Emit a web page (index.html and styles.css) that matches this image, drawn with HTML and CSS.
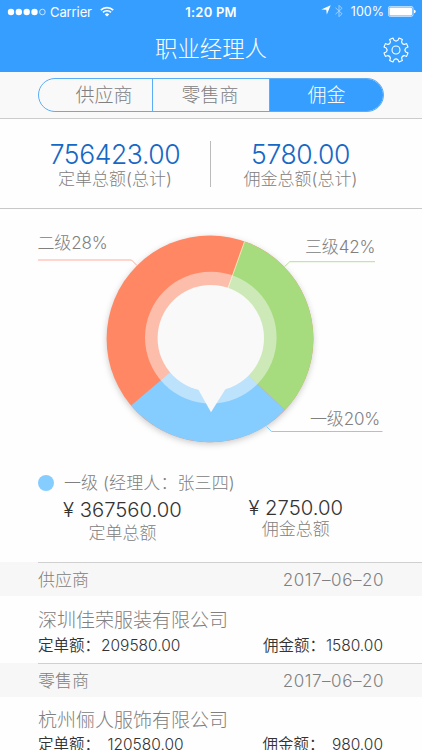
FILE: index.html
```html
<!DOCTYPE html>
<html lang="zh-CN">

<head>
    <meta charset="UTF-8">
    <meta name="viewport" content="width=device-width, initial-scale=1.0">
    <title>职业经理人</title>

    <link rel="stylesheet" href="styles.css">
</head>

<body>
    <header>
        <div class="status-bar">
            <div class="status-left">
                <svg width="39" height="8" viewBox="0 0 39 8">
                    <g fill="#fff">
                        <circle cx="4" cy="4" r="3.2" />
                        <circle cx="11.8" cy="4" r="3.2" />
                        <circle cx="19.7" cy="4" r="3.2" />
                        <circle cx="27.5" cy="4" r="3.2" />
                    </g>
                    <circle cx="35.4" cy="4" r="2.8" fill="none" stroke="#fff" stroke-width=".7" />
                </svg>
                <span class="carrier">Carrier</span>
                <svg class="wifi" width="14" height="11" viewBox="0 0 14 11" fill="none" stroke="#fff" stroke-width="1.7">
                    <path d="M.8 4.1a8.8 8.8 0 0 1 12.4 0M3 6.4a5.7 5.7 0 0 1 8 0" />
                    <path d="M7 10.6 4.8 8.4a3.2 3.2 0 0 1 4.4 0z" fill="#fff" stroke="none" />
                </svg>
            </div>
            <span class="time">1:20 PM</span>
            <div class="status-right">
                <svg class="location" width="10" height="10" viewBox="0 0 10 10"><path d="M9.7.3 5.8 9.6 5.3 4.8.3 4.4z" fill="#fff" /></svg>
                <svg class="bluetooth" width="8" height="14" viewBox="0 0 8 14" fill="none" stroke="#9bceff" stroke-width="1"><path d="M.5 3.8 7 9.7 4 12.7V1.3l3 3L.5 10.2" /></svg>
                <span class="percent">100%</span>
                <svg width="28" height="11" viewBox="0 0 28 11">
                    <rect x=".4" y=".4" width="24.6" height="10" rx="1.8" fill="none" stroke="#fff" stroke-width=".7" />
                    <rect x="1.4" y="1.4" width="22.6" height="8" rx=".8" fill="#fff" />
                    <path d="M26 3.7q1.7.2 1.7 1.8T26 7.3z" fill="#fff" />
                </svg>
            </div>
        </div>
        <div class="title-bar">
            <h1>职业经理人</h1>
            <svg class="settings" width="26" height="26" viewBox="0 0 26 26" fill="none" stroke="#fff" stroke-width="1.1" stroke-linejoin="round">
                <circle cx="13" cy="13" r="4" />
                <path d="M10 1 11 3.200Q13 5 15 3.200L16 1 19.400 2.400 18.600 4.700Q18.800 7.200 21.300 7.400L23.600 6.600 25 10 22.800 11Q21 13 22.800 15L25 16 23.600 19.400 21.300 18.600Q18.800 18.800 18.600 21.300L19.400 23.600 16 25 15 22.800Q13 21 11 22.800L10 25 6.600 23.600 7.400 21.300Q7.200 18.800 4.700 18.600L2.400 19.400 1 16 3.200 15Q5 13 3.200 11L1 10 2.400 6.600 4.700 7.400Q7.200 7.200 7.400 4.700L6.600 2.400z" />
            </svg>
        </div>
    </header>

    <nav class="tabs">
        <div class="tab-group">
            <a class="tab tab-first">供应商</a>
            <a class="tab">零售商</a>
            <a class="tab active">佣金</a>
        </div>
    </nav>

    <section class="summary">
        <div class="total">
            <strong>756423.00</strong>
            <span>定单总额(总计)</span>
        </div>
        <div class="total total-right">
            <strong>5780.00</strong>
            <span>佣金总额(总计)</span>
        </div>
    </section>

    <!-- Commission share by level -->
    <svg class="chart" width="422" height="256" viewBox="0 209 422 256">
        <circle class="ring" cx="210" cy="338.8" r="103.4" fill="#ff8763" />
        <path d="M210 338.8 244.6 241.4A103.4 103.4 0 0 1 284.9 410.1z" fill="#a6db7e" />
        <path d="M210 338.8 284.9 410.1A103.4 103.4 0 0 1 131.1 405.6z" fill="#86cdff" />
        <path d="M210 338.8 244.6 241.4" stroke="#ffe5b8" stroke-width="1" />
        <circle cx="210.8" cy="337.6" r="65.8" fill="#f9f9f9" fill-opacity=".48" />
        <circle cx="210.8" cy="338.2" r="53.2" fill="#f9f9f9" />
        <path d="M198 389 211 412.3 225.5 389z" fill="#f9f9f9" />

        <g fill="none" stroke-width="1">
            <path d="M38 260H131.5l5.5 5.5" stroke="#ffab9b" />
            <path d="M375 261.700H289.800l-5.300 5" stroke="#b5e092" />
            <path d="M382.500 431.500H271.500l-5-5" stroke="#86cdff" />
        </g>
        <g class="chart-label">
            <text x="37.500" y="249">二级28%</text>
            <text x="305" y="253">三级42%</text>
            <text x="310" y="425">一级20%</text>
        </g>
    </svg>

    <section class="detail">
        <p class="level"><i class="dot"></i>一级 (经理人：张三四)</p>
        <div class="amounts">
            <div class="amount">
                <strong>¥ 367560.00</strong>
                <span>定单总额</span>
            </div>
            <div class="amount amount-right">
                <strong>¥ 2750.00</strong>
                <span>佣金总额</span>
            </div>
        </div>
    </section>

    <section class="record">
        <div class="record-head"><span>供应商</span><time>2017–06–20</time></div>
        <h2>深圳佳荣服装有限公司</h2>
        <div class="record-money"><span>定单额：<b>209580.00</b></span><span>佣金额：<b>1580.00</b></span></div>
    </section>
    <section class="record record-last">
        <div class="record-head"><span>零售商</span><time>2017–06–20</time></div>
        <h2>杭州俪人服饰有限公司</h2>
        <div class="record-money"><span>定单额： <b>120580.00</b></span><span>佣金额： <b>980.00</b></span></div>
    </section>
</body>

</html>
```

FILE: styles.css
```css
* {
    box-sizing: border-box;
}

body {
    font-family: Inter, "Noto Sans CJK SC", sans-serif;
    font-weight: 300;
    background-color: #fefefe;
    color: #808080;
    margin: 0;
    height: 750px;
    overflow: hidden;
}

svg {
    display: block;
    flex-shrink: 0;
}

header {
    height: 72px;
    background-color: #369eff;
    color: #fff;
}

.status-bar {
    display: grid;
    grid-template-columns: 1fr auto 1fr;
    align-items: center;
    height: 23px;
    padding: 0 7px;
    font-size: 13px;
    font-weight: 400;
}

.status-left,
.status-right {
    display: flex;
    align-items: center;
}

.carrier {
    margin-left: 4px;
    letter-spacing: -0.1px;
}

.wifi {
    margin-left: 8px;
}

.time {
    font-weight: 600;
    letter-spacing: 0.2px;
}

.status-right {
    justify-content: flex-end;
    margin-right: -1px;
}

.location {
    margin-top: -3px;
}

.bluetooth {
    margin: -2px 8px 0 4px;
}

.percent {
    margin-right: 4px;
    font-size: 12.5px;
}

.title-bar {
    display: grid;
    grid-template-columns: 1fr auto 1fr;
    align-items: center;
    height: 49px;
    padding: 3px 13px 0;
}

h1 {
    grid-column: 2;
    margin: 0;
    font-size: 22.4px;
    font-weight: 300;
    line-height: 30px;
}

.settings {
    justify-self: end;
    margin-top: 2px;
}

.tabs {
    height: 47px;
    padding: 6px 38px 0;
    background-color: #f9f9f9;
    border-bottom: 1px solid #ccc;
}

.tab-group {
    display: grid;
    grid-template-columns: 113px 117px 1fr;
    height: 34px;
    border: 1px solid #5badf5;
    border-radius: 17px;
    overflow: hidden;
}

.tab {
    padding-right: 2px;
    font-size: 19px;
    line-height: 34px;
    text-align: center;
    border-left: 1px solid #5badf5;
}

.tab-first {
    padding: 0 0 0 17px;
    border-left: none;
}

.tab.active {
    padding-right: 0;
    background-color: #369eff;
    color: #fff;
}

.summary {
    display: grid;
    grid-template-columns: 211px 1fr;
    height: 90px;
    padding-top: 22px;
    border-bottom: 1px solid #c8c8c8;
}

.total {
    display: flex;
    flex-direction: column;
    align-items: center;
    height: 46px;
    padding-left: 20px;
    border-right: 1px solid #bbb;
}

.total-right {
    padding: 0 32px 0 0;
    border: none;
}

.total strong {
    font-size: 26.5px;
    font-weight: 350;
    letter-spacing: -0.4px;
    line-height: 27px;
    color: #1668c4;
}

.total span {
    margin-top: 1px;
    font-size: 17px;
    line-height: 20px;
}

.ring {
    filter: drop-shadow(0 2px 3px rgba(0, 0, 0, 0.2));
}

.chart-label {
    fill: #808080;
    font-size: 17px;
    letter-spacing: -0.15px;
}

.detail {
    height: 97px;
    padding: 7px 38px 0;
}

.level {
    display: flex;
    align-items: center;
    gap: 10px;
    margin: 0;
    font-size: 17px;
    letter-spacing: 0.1px;
    line-height: 22px;
    white-space: pre;
}

.dot {
    width: 16px;
    height: 16px;
    border-radius: 50%;
    background-color: #86cdff;
}

.amounts {
    display: flex;
    justify-content: space-between;
    padding: 4px 41px 0 25px;
}

.amount {
    display: flex;
    flex-direction: column;
    align-items: center;
}

.amount strong {
    font-size: 20.3px;
    font-weight: 350;
    line-height: 24px;
    color: #333;
}

.amount span {
    margin-top: 1px;
    font-size: 17px;
    line-height: 20px;
}

.amount-right {
    margin-top: -2px;
}

.amount-right span {
    margin-top: -1px;
}

.record {
    height: 101px;
}

.record-head {
    display: flex;
    justify-content: space-between;
    height: 34px;
    padding: 0 38px;
    background: linear-gradient(#d0d0d0, #d0d0d0) 38px 0 / 100% 1px no-repeat #f7f7f7;
    font-size: 17px;
    line-height: 37px;
}

.record-head time {
    letter-spacing: 0.55px;
}

h2 {
    margin: 11px 38px 0;
    font-size: 19px;
    font-weight: 300;
    line-height: 28px;
}

.record-money {
    display: flex;
    justify-content: space-between;
    padding: 0 39px 0 38px;
    font-size: 15.5px;
    font-weight: 350;
    line-height: 22px;
    color: #333;
    white-space: pre;
}

.record-money b {
    margin-left: 1px;
    font-weight: 350;
}

.record-last h2 {
    margin-top: 10px;
    line-height: 27px;
}

.record-last b {
    margin-left: 3px;
}
```
